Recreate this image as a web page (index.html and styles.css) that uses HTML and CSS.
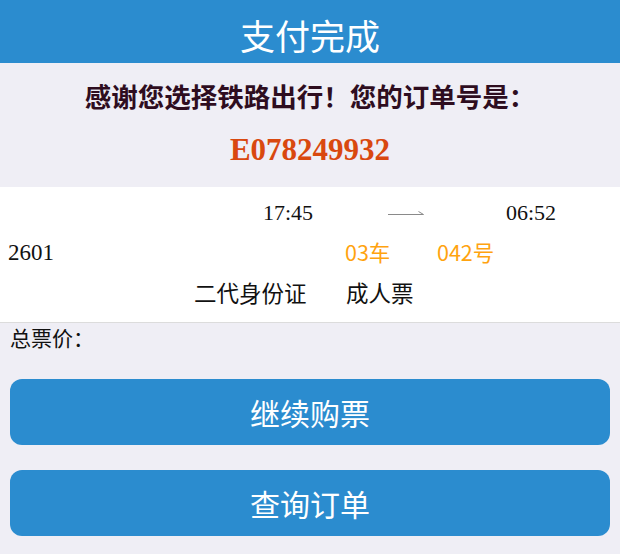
FILE: index.html
```html
<!DOCTYPE html>
<html lang="zh-CN">
<head>
    <meta charset="UTF-8">
    <meta name="viewport" content="width=device-width, initial-scale=1.0">
    <title>支付完成</title>
    <link rel="stylesheet" href="styles.css">
</head>
<body>
    <header class="topbar">支付完成</header>

    <div class="thanks">感谢您选择铁路出行！您的订单号是：</div>
    <div class="order-no">E078249932</div>

    <!-- ticket info -->
    <div class="ticket">
        <div class="row row-time">
            <span class="dep">17:45</span>
            <span class="arrow">
                <svg width="36" height="8" viewBox="0 0 36 8">
                    <path d="M0 6.5 H35.5 M30.5 3.5 L35.5 6.5" stroke="#8a8a8a" stroke-width="1" fill="none"/>
                </svg>
            </span>
            <span class="arr">06:52</span>
        </div>
        <div class="row row-seat">
            <span class="train">2601</span>
            <span class="car">03车</span>
            <span class="seat">042号</span>
        </div>
        <div class="row row-pass">
            <span class="idtype">二代身份证</span>
            <span class="tktype">成人票</span>
        </div>
    </div>

    <div class="total">总票价：</div>

    <div class="actions">
        <button class="btn">继续购票</button>
        <button class="btn">查询订单</button>
    </div>
</body>
</html>
```

FILE: styles.css
```css
body, html {
    margin: 0;
    padding: 0;
    font-family: "Noto Sans CJK SC", "Noto Sans", sans-serif;
    background-color: #efeef5;
}
.topbar {
    background-color: #2b8ccf;
    color: #fff;
    font-size: 35px;
    height: 57px;
    line-height: 57px;
    padding-top: 6px;
    text-align: center;
}
.thanks {
    margin-top: 15px;
    font-size: 26.5px;
    line-height: 36px;
    font-weight: bold;
    color: #2e0d1f;
    text-align: center;
}
.order-no {
    margin-top: 16px;
    font-family: "Liberation Serif", serif;
    font-size: 31px;
    line-height: 40px;
    font-weight: bold;
    color: #d9480f;
    text-align: center;
}
.ticket {
    margin-top: 17px;
    background-color: #fff;
    padding: 6px 0 10px;
    border-bottom: 1px solid #dcdcdc;
}
.row {
    display: flex;
    height: 40px;
    line-height: 40px;
}
.row-time {
    padding-left: 263px;
    font-family: "Liberation Serif", serif;
    font-size: 22px;
    color: #111;
}
.row-time .dep {
    width: 125px;
}
.row-time .arrow {
    width: 118px;
    display: flex;
    align-items: center;
    margin-top: -2px;
}
.row-seat {
    padding-left: 8px;
}
.row-seat .train {
    width: 337px;
    font-family: "Liberation Serif", serif;
    font-size: 23px;
    color: #111;
}
.row-seat .car {
    width: 92px;
}
.row-seat .car, .row-seat .seat {
    font-size: 21.5px;
    color: #ffa30f;
    margin-top: -1px;
}
.row-pass {
    padding-left: 194px;
    font-size: 22.5px;
    color: #111;
    margin-top: -1px;
}
.row-pass .idtype {
    width: 152px;
}
.total {
    padding-left: 10px;
    font-size: 21px;
    line-height: 28px;
    color: #111;
}
.actions {
    margin-top: 28px;
    padding: 0 10px;
}
.btn {
    display: block;
    width: 100%;
    height: 66px;
    margin-bottom: 25px;
    background-color: #2b8ccf;
    color: #fff;
    border: none;
    border-radius: 12px;
    font-family: "Noto Sans CJK SC", "Noto Sans", sans-serif;
    font-size: 30px;
    cursor: pointer;
}
```
